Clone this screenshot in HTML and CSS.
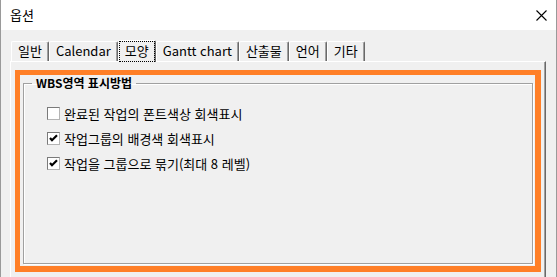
FILE: index.html
```html
<!DOCTYPE html>
<html lang="ko">
<head>
    <meta charset="UTF-8">
    <meta name="viewport" content="width=device-width, initial-scale=1.0">
    <title>옵션</title>
    <link rel="stylesheet" href="styles.css">
</head>
<body>
<div class="window">
    <div class="titlebar">
        <span class="title">옵션</span>
        <svg class="close" width="11" height="11" viewBox="0 0 11 11">
            <path d="M0.5 0.5 L10.5 10.5 M10.5 0.5 L0.5 10.5" stroke="#000" stroke-width="1.1" fill="none"/>
        </svg>
    </div>
    <ul class="tabs">
        <li class="tab">일반</li>
        <li class="tab">Calendar</li>
        <li class="tab active"><span class="focus">모양</span></li>
        <li class="tab">Gantt chart</li>
        <li class="tab">산출물</li>
        <li class="tab">언어</li>
        <li class="tab">기타</li>
    </ul>
    <div class="panel">
        <div class="highlight">
            <fieldset class="group">
                <legend>WBS영역 표시방법</legend>
                <div class="options">
                    <label class="check"><span class="box"></span>완료된 작업의 폰트색상 회색표시</label>
                    <label class="check"><span class="box"><svg width="11" height="11" viewBox="0 0 11 11"><polyline points="2,5 4,7.2 9,2.2" stroke="#000" stroke-width="2.2" fill="none"/></svg></span>작업그룹의 배경색 회색표시</label>
                    <label class="check"><span class="box"><svg width="11" height="11" viewBox="0 0 11 11"><polyline points="2,5 4,7.2 9,2.2" stroke="#000" stroke-width="2.2" fill="none"/></svg></span>작업을 그룹으로 묶기(최대 8 레벨)</label>
                </div>
            </fieldset>
        </div>
    </div>
</div>
</body>
</html>
```

FILE: styles.css
```css
html, body {
    margin: 0;
    padding: 0;
}
body {
    width: 557px;
    height: 277px;
    overflow: hidden;
    background: #f0f0f0;
    color: #000;
    font: 13px/16px "Noto Sans CJK KR", "Noto Sans", sans-serif;
}
.window {
    height: 277px;
    box-sizing: border-box;
    border-left: 1px solid #9a9a9a;
    border-right: 1px solid #9a9a9a;
    background: #f0f0f0;
}
.titlebar {
    height: 30px;
    display: flex;
    align-items: center;
    justify-content: space-between;
    padding: 0 9px 0 9px;
    background: #fff;
}
.close {
    display: block;
}
.tabs {
    display: flex;
    align-items: flex-end;
    height: 21px;
    margin: 10px 0 0 10px;
    padding: 0;
    list-style: none;
}
.tab {
    height: 20px;
    box-sizing: border-box;
    padding: 0 6px;
    border: 1px solid #fff;
    border-bottom: 0;
    border-right-color: #696969;
    border-radius: 2px 2px 0 0;
    box-shadow: inset -1px 0 #a0a0a0;
    line-height: 18px;
    white-space: nowrap;
}
.tab.active {
    position: relative;
    z-index: 1;
    height: 22px;
    margin-bottom: -1px;
    padding: 0;
    background: #f0f0f0;
}
.focus {
    display: block;
    height: 21px;
    box-sizing: border-box;
    padding: 0 5px;
    border: 1px dotted #000;
    line-height: 18px;
}
/* 패널 아래쪽은 창 밖으로 잘려 보이지 않음 */
.panel {
    width: 536px;
    height: 216px;
    margin-left: 9px;
    box-sizing: border-box;
    padding: 8px 4px 0 4px;
    border: 1px solid #fff;
    border-bottom: 0;
    border-right-color: #696969;
    box-shadow: inset -1px 0 #a0a0a0;
}
.highlight {
    height: 202px;
    box-sizing: border-box;
    padding: 0 2px 2px 3px;
    border-style: solid;
    border-color: #ff7f27;
    border-width: 5px 6px 6px 5px;
}
.group {
    height: 189px;
    box-sizing: border-box;
    margin: 0;
    padding: 0;
    min-width: 0;
    border: 1px solid #a0a0a0;
    box-shadow: 1px 1px 0 #fff, inset 1px 1px 0 #fff;
}
.group legend {
    margin-left: 8px;
    padding: 0 4px;
    font-size: 12px;
    font-weight: bold;
    line-height: 16px;
}
.options {
    padding: 10px 0 0 23px;
}
.check {
    display: flex;
    align-items: center;
    height: 25px;
    white-space: nowrap;
}
.box {
    width: 13px;
    height: 13px;
    box-sizing: border-box;
    margin-right: 4px;
    background: #fff;
    border: 1px solid;
    border-color: #7a7a7a #b4b4b4 #b4b4b4 #7a7a7a;
}
.box svg {
    display: block;
}
```
